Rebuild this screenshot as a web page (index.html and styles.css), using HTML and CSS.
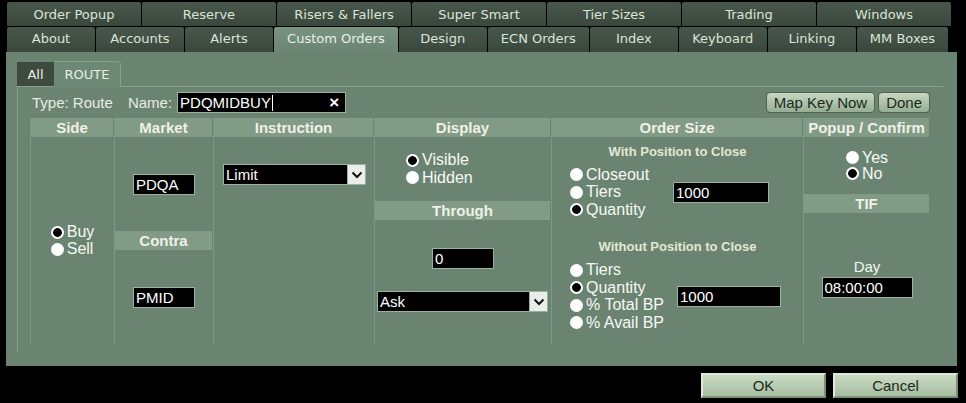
FILE: index.html
```html
<!DOCTYPE html>
<html lang="en">
<head>
<meta charset="UTF-8" />
<title>Custom Orders</title>
<link rel="stylesheet" href="styles.css">
</head>
<body>
<div class="tabs">
    <div class="tabrow row1">
    <div class="tab">Order Popup</div>
    <div class="tab">Reserve</div>
    <div class="tab">Risers &amp; Fallers</div>
    <div class="tab">Super Smart</div>
    <div class="tab">Tier Sizes</div>
    <div class="tab">Trading</div>
    <div class="tab">Windows</div>
    </div>
    <div class="tabrow row2">
    <div class="tab">About</div>
    <div class="tab">Accounts</div>
    <div class="tab">Alerts</div>
    <div class="tab active">Custom Orders</div>
    <div class="tab">Design</div>
    <div class="tab">ECN Orders</div>
    <div class="tab">Index</div>
    <div class="tab">Keyboard</div>
    <div class="tab">Linking</div>
    <div class="tab">MM Boxes</div>
    </div>
</div>

<div class="panel">
    <div class="subtabs">
    <div class="subtab all">All</div>
    <div class="subtab route">ROUTE</div>
    </div>

    <div class="frame">
    <div class="toolbar">
        <span class="lbl">Type: Route</span>
        <span class="lbl name-lbl">Name:</span>
        <div class="field name"><span>PDQMIDBUY</span><span class="caret"></span><span class="clear">&times;</span></div>
        <div class="spacer"></div>
        <button class="btn">Map Key Now</button>
        <button class="btn">Done</button>
    </div>

    <div class="grid">
        <div class="col">
        <div class="head">Side</div>
        <div class="body center">
            <div class="opts tight">
            <div class="opt"><span class="r on"></span>Buy</div>
            <div class="opt"><span class="r"></span>Sell</div>
            </div>
        </div>
        </div>

        <div class="col">
        <div class="head">Market</div>
        <div class="body center"><div class="field code">PDQA</div></div>
        <div class="head">Contra</div>
        <div class="body center"><div class="field code">PMID</div></div>
        </div>

        <div class="col">
        <div class="head">Instruction</div>
        <div class="body instr">
            <div class="sel limit"><span>Limit</span><span class="arr"><svg width="12" height="8" viewBox="0 0 12 8"><polyline points="1.5,1.5 6,6 10.5,1.5" fill="none" stroke="#111" stroke-width="2"/></svg></span></div>
        </div>
        </div>

        <div class="col">
        <div class="head">Display</div>
        <div class="disp-top">
            <div class="opts">
            <div class="opt"><span class="r on"></span>Visible</div>
            <div class="opt"><span class="r"></span>Hidden</div>
            </div>
        </div>
        <div class="head">Through</div>
        <div class="body through">
            <div class="field code zero">0</div>
            <div class="sel ask"><span>Ask</span><span class="arr"><svg width="12" height="8" viewBox="0 0 12 8"><polyline points="1.5,1.5 6,6 10.5,1.5" fill="none" stroke="#111" stroke-width="2"/></svg></span></div>
        </div>
        </div>

        <div class="col">
        <div class="head">Order Size</div>
        <div class="body sizes">
            <div class="sub">With Position to Close</div>
            <div class="group">
            <div class="opts">
                <div class="opt"><span class="r"></span>Closeout</div>
                <div class="opt"><span class="r"></span>Tiers</div>
                <div class="opt"><span class="r on"></span>Quantity</div>
            </div>
            <div class="field qty">1000</div>
            </div>
            <div class="sub second">Without Position to Close</div>
            <div class="group">
            <div class="opts wide">
                <div class="opt"><span class="r"></span>Tiers</div>
                <div class="opt"><span class="r on"></span>Quantity</div>
                <div class="opt"><span class="r"></span>% Total BP</div>
                <div class="opt"><span class="r"></span>% Avail BP</div>
            </div>
            <div class="field qty">1000</div>
            </div>
        </div>
        </div>

        <div class="col">
        <div class="head">Popup / Confirm</div>
        <div class="popup-top">
            <div class="opts short">
            <div class="opt"><span class="r"></span>Yes</div>
            <div class="opt"><span class="r on"></span>No</div>
            </div>
        </div>
        <div class="head">TIF</div>
        <div class="body tif">
            <div class="day">Day</div>
            <div class="field time">08:00:00</div>
        </div>
        </div>
    </div>
    </div>
</div>

<div class="footer">
    <button class="big">OK</button>
    <button class="big">Cancel</button>
</div>
</body>
</html>
```

FILE: styles.css
```css
:root {
--panel: #6b8472;
--head: #829b87;
--line: #87a08d;
--colline: #7e9786;
--tab: #3d4a40;
}

body {
margin: 0;
width: 966px;
height: 403px;
overflow: hidden;
background: #000;
font-family: "Liberation Sans", Arial, sans-serif;
}

.tabs {
padding-top: 2px;
}

.tabrow {
display: flex;
gap: 1px;
margin-left: 7px;
}

.row1 {
width: 944px;
height: 24px;
margin-bottom: 1px;
}

.row2 {
width: 941px;
height: 25px;
}

.tab {
flex: 1 0 auto;
min-width: 88px;
padding: 0 11px 2px;
box-sizing: border-box;
display: flex;
align-items: center;
justify-content: center;
background: linear-gradient(#48574b, #3a473d);
color: #dbe4d7;
font: 13px "DejaVu Sans", sans-serif;
border-radius: 2px 2px 0 0;
}

.row1 .tab {
flex: 1 1 0;
min-width: 0;
padding: 0;
}

.tab.active {
background: linear-gradient(#7a9482, var(--panel));
color: #eaf1e7;
}

.panel {
margin-left: 6px;
width: 951px;
height: 314px;
padding: 9px 0 0 11px;
box-sizing: border-box;
background: var(--panel);
}

.subtabs {
display: flex;
align-items: flex-end;
height: 25px;
}

.subtab {
display: flex;
align-items: center;
justify-content: center;
box-sizing: border-box;
color: #e8efe4;
font: 13px "DejaVu Sans", sans-serif;
}

.subtab.all {
width: 37px;
height: 24px;
background: var(--tab);
}

.subtab.route {
position: relative;
width: 67px;
height: 26px;
margin-bottom: -1px;
background: #6e8876;
border-top: 1px solid var(--line);
border-right: 1px solid var(--line);
border-radius: 0 4px 0 0;
}

.frame {
width: 926px;
height: 266px;
box-sizing: border-box;
padding-top: 5px;
border-top: 1px solid var(--line);
border-left: 1px solid var(--line);
}

.toolbar {
display: flex;
align-items: center;
height: 21px;
padding: 0 13px 0 14px;
}

.lbl {
color: #e6ede0;
font-size: 15px;
}

.name-lbl {
margin-left: 15px;
}

.field {
display: flex;
align-items: center;
box-sizing: border-box;
height: 21px;
padding-left: 2px;
background: #000;
border: 1px solid #9bb1a0;
color: #fff;
font-size: 15px;
}

.name {
width: 169px;
margin-left: 5px;
}

.caret {
width: 1px;
height: 16px;
margin-left: 1px;
background: #fff;
}

.clear {
margin-left: auto;
margin-right: 6px;
font-size: 17px;
font-weight: bold;
}

.spacer {
flex: 1;
}

.btn {
height: 21px;
padding: 0 7px;
margin-left: 3px;
background: linear-gradient(#c6d8c1, #96ae93);
border: 1px solid #4f634f;
border-radius: 4px;
color: #1b2a1d;
font: 15px "Liberation Sans", Arial, sans-serif;
}

.grid {
display: grid;
grid-template-columns: 84px 99px 161px 177px 252px 127px;
height: 226px;
margin: 5px 0 0 12px;
}

.col {
display: flex;
flex-direction: column;
border-left: 1px solid var(--colline);
}

.head {
flex: none;
height: 19px;
margin-right: 1px;
background: var(--head);
color: #eef2e6;
font-size: 15px;
font-weight: bold;
line-height: 19px;
text-align: center;
}

.body {
flex: 1;
}

.center {
display: flex;
align-items: center;
justify-content: center;
}

.opts {
display: flex;
flex-direction: column;
}

.opt {
display: flex;
align-items: center;
height: 17.5px;
color: #f6f9f3;
font-size: 16px;
}

.tight .opt,
.short .opt {
height: 17px;
}

.short .opt {
height: 16px;
}

.r {
flex: none;
width: 13px;
height: 13px;
margin-right: 3px;
border-radius: 50%;
background: #fff;
}

.r.on {
background: radial-gradient(circle, #000 0 4px, #fff 4.7px);
}

.code {
width: 62px;
}

.sel {
display: flex;
box-sizing: border-box;
height: 21px;
background: #000;
border: 1px solid #9bb1a0;
color: #fff;
font-size: 15px;
line-height: 19px;
padding-left: 2px;
}

.sel .arr {
display: flex;
align-items: center;
justify-content: center;
width: 17px;
margin-left: auto;
background: #eaeeea;
border-left: 1px solid #9bb1a0;
}

.instr {
padding: 27px 0 0 9px;
}

.limit {
width: 143px;
}

.disp-top {
display: flex;
align-items: center;
height: 64px;
padding-left: 31px;
}

.through {
display: flex;
flex-direction: column;
align-items: center;
padding-top: 28px;
}

.ask {
align-self: flex-start;
width: 171px;
margin: 22px 0 0 2px;
}

.sizes {
padding-top: 7px;
}

.sub {
height: 16px;
color: #e2e8d0;
font-size: 13px;
font-weight: bold;
line-height: 16px;
text-align: center;
}

.sub.second {
margin-top: 20px;
margin-bottom: 7px;
}

.group {
display: flex;
align-items: center;
padding-left: 18px;
}

.sizes .sub:first-child + .group {
margin-top: 6px;
}

.group .opts {
width: 103px;
}

.group .opts.wide {
width: 107px;
}

.qty {
width: 96px;
}

.group .opts.wide + .qty {
width: 104px;
}

.popup-top {
display: flex;
align-items: center;
justify-content: center;
height: 57px;
}

.tif {
display: flex;
flex-direction: column;
align-items: center;
padding-top: 46px;
}

.day {
height: 16px;
color: #f3f6ef;
font-size: 15px;
line-height: 16px;
margin-bottom: 2px;
}

.time {
width: 91px;
}

.footer {
display: flex;
justify-content: flex-end;
gap: 7px;
padding: 7px 8px 0 0;
}

.big {
width: 125px;
height: 25px;
padding: 0;
background: linear-gradient(#cadcc4, #a6bda2);
border: 2px solid;
border-color: #dcead7 #7a9177 #7a9177 #dcead7;
color: #1c2a1c;
font: 15px "Liberation Sans", Arial, sans-serif;
}
```
